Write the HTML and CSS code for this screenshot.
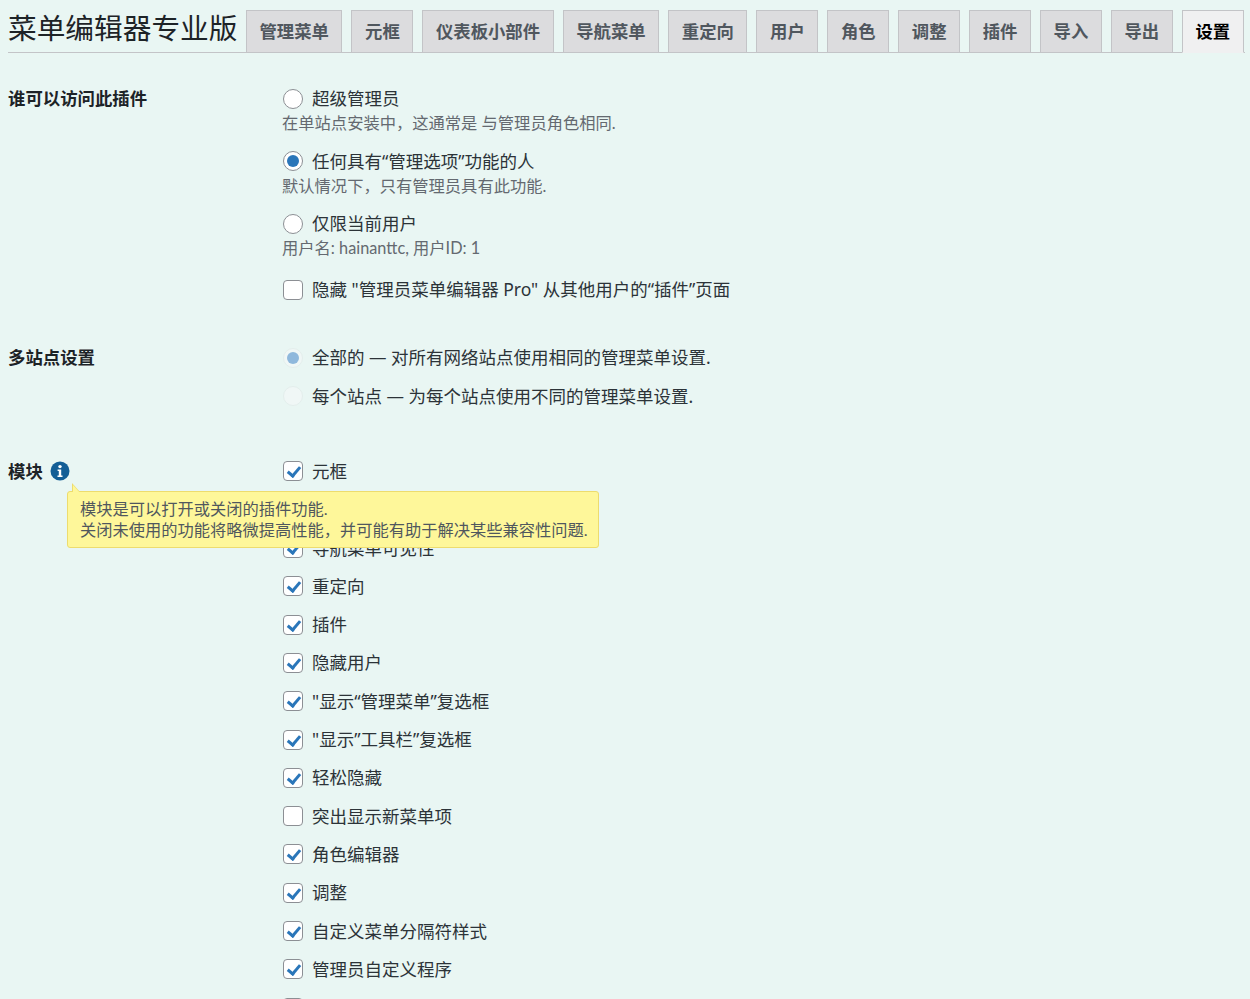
FILE: index.html
```html
<!DOCTYPE html>
<html lang="zh-CN">
<head>
    <meta charset="utf-8">
    <title>菜单编辑器专业版</title>
    <link rel="stylesheet" href="styles.css">
</head>
<body>
    <div class="wrap">
        <div class="page-header">
            <h1>菜单编辑器专业版</h1>
            <nav class="tabs">
                <a class="tab">管理菜单</a>
                <a class="tab">元框</a>
                <a class="tab">仪表板小部件</a>
                <a class="tab">导航菜单</a>
                <a class="tab">重定向</a>
                <a class="tab">用户</a>
                <a class="tab">角色</a>
                <a class="tab">调整</a>
                <a class="tab">插件</a>
                <a class="tab">导入</a>
                <a class="tab">导出</a>
                <a class="tab active">设置</a>
            </nav>
        </div>

        <div class="section access">
            <div class="section-title">谁可以访问此插件</div>
            <div class="section-body">
                <div class="option"><span class="radio"></span>超级管理员</div>
                <div class="desc">在单站点安装中，这通常是 与管理员角色相同.</div>
                <div class="option"><span class="radio checked"></span>任何具有“管理选项”功能的人</div>
                <div class="desc">默认情况下，只有管理员具有此功能.</div>
                <div class="option"><span class="radio"></span>仅限当前用户</div>
                <div class="desc">用户名: hainanttc, 用户ID: 1</div>
                <div class="option hide-plugin"><span class="checkbox"></span>隐藏 "管理员菜单编辑器 Pro" 从其他用户的“插件”页面</div>
            </div>
        </div>

        <div class="section multisite">
            <div class="section-title">多站点设置</div>
            <div class="section-body">
                <div class="option"><span class="radio disabled checked"></span>全部的 — 对所有网络站点使用相同的管理菜单设置.</div>
                <div class="option"><span class="radio disabled"></span>每个站点 — 为每个站点使用不同的管理菜单设置.</div>
            </div>
        </div>

        <div class="section modules">
            <div class="section-title">
                模块
                <svg class="info-icon" viewBox="0 0 20 20" width="20" height="20">
                    <circle cx="10" cy="10" r="9.5" fill="#135e96"/>
                    <circle cx="10" cy="5.6" r="1.7" fill="#fff"/>
                    <path d="M7.6 8.4h3.6v6.1h1.3v1.5H7.5v-1.5h1.3V9.9H7.6z" fill="#fff"/>
                </svg>
                <div class="tooltip">
                    模块是可以打开或关闭的插件功能.<br>
                    关闭未使用的功能将略微提高性能，并可能有助于解决某些兼容性问题.
                </div>
            </div>
            <div class="section-body">
                <div class="option"><span class="checkbox checked"></span>元框</div>
                <div class="option"><span class="checkbox checked"></span>仪表板小部件</div>
                <div class="option"><span class="checkbox checked"></span>导航菜单可见性</div>
                <div class="option"><span class="checkbox checked"></span>重定向</div>
                <div class="option"><span class="checkbox checked"></span>插件</div>
                <div class="option"><span class="checkbox checked"></span>隐藏用户</div>
                <div class="option"><span class="checkbox checked"></span>"显示“管理菜单”复选框</div>
                <div class="option"><span class="checkbox checked"></span>"显示”工具栏”复选框</div>
                <div class="option"><span class="checkbox checked"></span>轻松隐藏</div>
                <div class="option"><span class="checkbox"></span>突出显示新菜单项</div>
                <div class="option"><span class="checkbox checked"></span>角色编辑器</div>
                <div class="option"><span class="checkbox checked"></span>调整</div>
                <div class="option"><span class="checkbox checked"></span>自定义菜单分隔符样式</div>
                <div class="option"><span class="checkbox checked"></span>管理员自定义程序</div>
                <div class="option"><span class="checkbox"></span></div>
            </div>
        </div>
    </div>
</body>
</html>
```

FILE: styles.css
```css
html, body {
    height: 999px;
    overflow: hidden;
}
body {
    margin: 0;
    background: #e9f6f3;
    color: #3c434a;
    font-family: Lato, "Noto Sans CJK SC", sans-serif;
    font-size: 17.4px;
}
.wrap {
    padding: 0 5px 0 8px;
}
.page-header {
    display: flex;
    align-items: flex-end;
    height: 52px;
    border-bottom: 1px solid #c3c4c7;
}
h1 {
    margin: 0 8.4px 0 0;
    color: #1d2327;
    font-size: 28.7px;
    font-weight: 400;
    line-height: 47px;
    white-space: nowrap;
}
.tabs {
    display: flex;
    gap: 9px;
    margin-bottom: -1px;
}
.tab {
    box-sizing: border-box;
    height: 43px;
    padding: 0 12.6px;
    border: 1px solid #c3c4c7;
    background: #dcdcde;
    color: #50575e;
    font-size: 17.35px;
    font-weight: 700;
    line-height: 42px;
    white-space: nowrap;
}
.tab.active {
    background: #f0f0f1;
    border-bottom-color: #f0f0f1;
    color: #000;
}
.section {
    display: flex;
}
.access {
    margin-top: 33px;
    margin-bottom: 30px;
}
.multisite {
    margin-bottom: 37px;
}
.section-title {
    position: relative;
    display: flex;
    align-items: flex-start;
    gap: 7px;
    width: 274px;
    flex: none;
    color: #1d2327;
    font-weight: 700;
    line-height: 25px;
}
.info-icon {
    margin-top: 2px;
}
.option {
    display: flex;
    align-items: center;
    height: 25px;
    margin-bottom: 13.3px;
    color: #2c3338;
    font-family: "Noto Sans", "Noto Sans CJK SC", sans-serif;
    font-size: 17.5px;
    line-height: 23px;
    white-space: nowrap;
}
.desc {
    height: 25px;
    margin: -14px 0 13.3px;
    color: #646970;
    font-size: 16.3px;
    line-height: 25px;
}
.hide-plugin {
    margin-top: 16.6px;
}
.radio, .checkbox {
    box-sizing: border-box;
    position: relative;
    width: 20px;
    height: 20px;
    margin: 0 9px 0 1px;
    border: 1px solid #8c8f94;
    background: #fff;
    flex: none;
}
.radio {
    border-radius: 50%;
}
.radio.checked::after {
    content: "";
    position: absolute;
    top: 3px;
    left: 3px;
    width: 12px;
    height: 12px;
    border-radius: 50%;
    background: #2a76b9;
}
.radio.disabled {
    border-color: #e4eeec;
    background: #f0f7f6;
}
.radio.disabled.checked::after {
    background: #8fb8dc;
}
.checkbox {
    border-radius: 4px;
}
.checkbox.checked::after {
    content: "";
    position: absolute;
    top: 2px;
    left: 6px;
    width: 5px;
    height: 10px;
    border: solid #2a76b9;
    border-width: 0 3px 3px 0;
    transform: rotate(40deg);
}
.tooltip {
    position: absolute;
    top: 32px;
    left: 59px;
    z-index: 2;
    box-sizing: border-box;
    width: 532px;
    height: 57px;
    padding: 6px 12px;
    border: 1px solid #eddc6e;
    border-radius: 3px;
    background: #fef79a;
    color: #50575e;
    font-size: 16.25px;
    font-weight: 400;
    line-height: 21px;
    white-space: nowrap;
}
.tooltip::before, .tooltip::after {
    content: "";
    position: absolute;
    left: 4px;
    border-left: 8px solid #eddc6e;
    border-top: 9px solid transparent;
}
.tooltip::before {
    top: -9px;
}
.tooltip::after {
    top: -7px;
    left: 5px;
    border-left-color: #fef79a;
}
```
